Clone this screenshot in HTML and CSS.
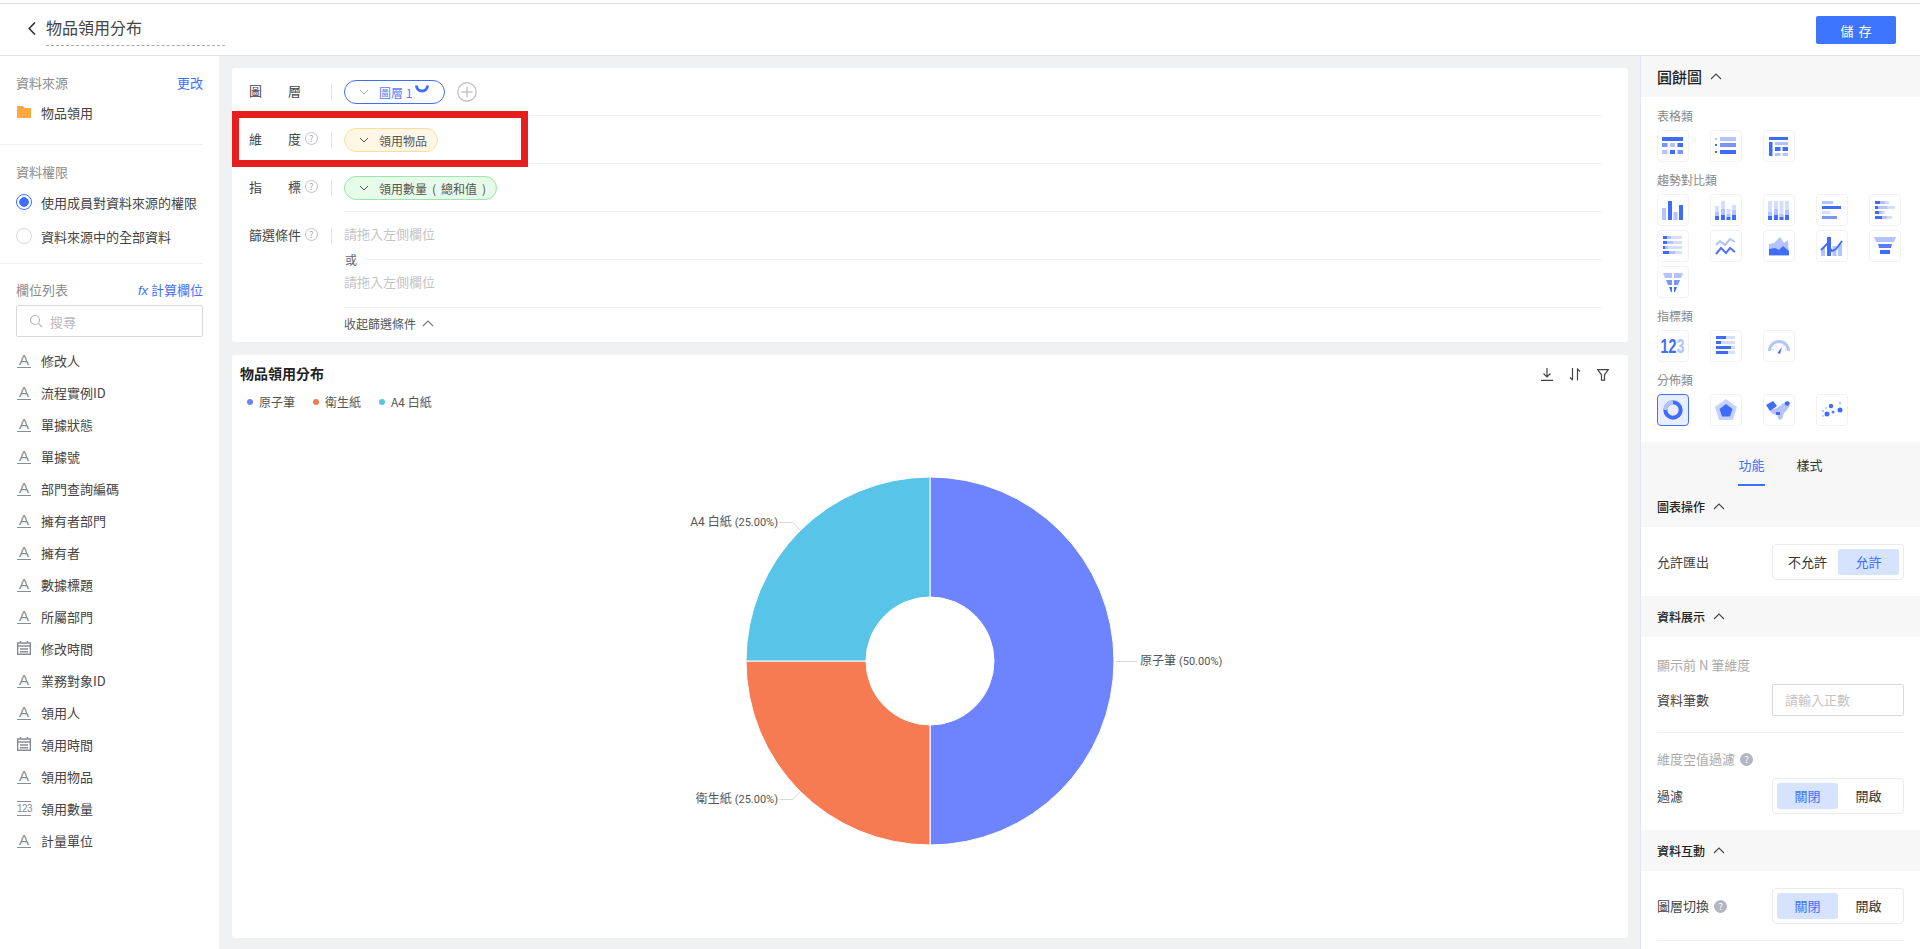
FILE: index.html
```html
<!DOCTYPE html>
<html lang="zh-Hant">
<head>
    <meta charset="UTF-8">
    <title>物品領用分布</title>
    <link rel="stylesheet" href="styles.css">
</head>
<body>
    <svg class="sprite" width="0" height="0">
        <symbol id="chev-down" viewBox="0 0 10 6"><polyline points="1,1 5,5 9,1" fill="none" stroke="currentColor" stroke-width="1"/></symbol>
        <symbol id="chev-up" viewBox="0 0 12 7"><polyline points="1,6 6,1 11,6" fill="none" stroke="currentColor" stroke-width="1.1"/></symbol>
        <symbol id="date" viewBox="0 0 14 14"><path d="M3.5 0v2M10.5 0v2M.7 2h12.600v11.300H.7zM.7 5h12.600M3 8h8M3 10.800h8" fill="none" stroke="#8a8d99" stroke-width="1.4"/></symbol>
    </svg>

    <div class="topline"></div>
    <header class="header">
        <svg class="back" width="8" height="13" viewBox="0 0 8 13"><polyline points="7,.5 1.2,6.500 7,12.500" fill="none" stroke="#333" stroke-width="1.6"/></svg>
        <div class="title">物品領用分布</div>
        <button class="save">儲 存</button>
    </header>

    <div class="layout">
        <!-- 左側資料欄 -->
        <aside class="sidebar">
            <div class="block source-block">
                <div class="block-head"><span>資料來源</span><a class="link">更改</a></div>
                <div class="source-item">
                    <svg width="14" height="12" viewBox="0 0 14 12"><path d="M0 0h6l1.500 2H14v10H0z" fill="#ffa940"/></svg>
                    物品領用
                </div>
            </div>
            <div class="block auth-block">
                <div class="block-head"><span>資料權限</span></div>
                <div class="radio-row"><i class="radio on"></i>使用成員對資料來源的權限</div>
                <div class="radio-row"><i class="radio"></i>資料來源中的全部資料</div>
            </div>
            <div class="field-block">
                <div class="block-head"><span>欄位列表</span><a class="link"><em>fx</em> 計算欄位</a></div>
                <div class="search">
                    <svg width="14" height="14" viewBox="0 0 14 14"><circle cx="6" cy="6" r="4.500" fill="none" stroke="#bbb" stroke-width="1.200"/><path d="M9.500 9.500L13 13" stroke="#bbb" stroke-width="1.200"/></svg>
                    搜尋
                </div>
                <ul class="fields">
                    <li><span class="type-a">A</span>修改人</li>
                    <li><span class="type-a">A</span>流程實例ID</li>
                    <li><span class="type-a">A</span>單據狀態</li>
                    <li><span class="type-a">A</span>單據號</li>
                    <li><span class="type-a">A</span>部門查詢編碼</li>
                    <li><span class="type-a">A</span>擁有者部門</li>
                    <li><span class="type-a">A</span>擁有者</li>
                    <li><span class="type-a">A</span>數據標題</li>
                    <li><span class="type-a">A</span>所屬部門</li>
                    <li><svg class="type-date"><use href="#date"/></svg>修改時間</li>
                    <li><span class="type-a">A</span>業務對象ID</li>
                    <li><span class="type-a">A</span>領用人</li>
                    <li><svg class="type-date"><use href="#date"/></svg>領用時間</li>
                    <li><span class="type-a">A</span>領用物品</li>
                    <li><span class="type-num">123</span>領用數量</li>
                    <li><span class="type-a">A</span>計量單位</li>
                </ul>
            </div>
        </aside>

        <!-- 中間設定與圖表 -->
        <main class="main">
            <section class="card query">
                <div class="q-row">
                    <div class="q-label"><span class="q-name">圖層</span></div>
                    <div class="q-body lined">
                        <span class="pill pill-layer">
                            <svg class="chev"><use href="#chev-down"/></svg>圖層 1
                            <svg class="pill-donut" width="14" height="10" viewBox="0 0 14 10"><path d="M1.500 1.500a5.500 5.500 0 0 0 11 0" fill="none" stroke="#3f6fff" stroke-width="3"/></svg>
                        </span>
                        <span class="add">
                            <svg width="20" height="20" viewBox="0 0 20 20"><circle cx="10" cy="10" r="9.200" fill="none" stroke="#c3c5d0" stroke-width="1.400"/><path d="M10 4.500v11M4.500 10h11" stroke="#c3c5d0" stroke-width="1.400"/></svg>
                        </span>
                    </div>
                </div>
                <div class="q-row">
                    <div class="q-label"><span class="q-name">維度</span><i class="help">?</i></div>
                    <div class="q-body lined">
                        <span class="pill pill-dim"><svg class="chev"><use href="#chev-down"/></svg>領用物品</span>
                    </div>
                </div>
                <div class="q-row">
                    <div class="q-label"><span class="q-name">指標</span><i class="help">?</i></div>
                    <div class="q-body lined">
                        <span class="pill pill-metric"><svg class="chev"><use href="#chev-down"/></svg>領用數量 ( 總和值 )</span>
                    </div>
                </div>
                <div class="q-filter">
                    <div class="q-label"><span class="q-name">篩選條件</span><i class="help">?</i></div>
                    <div class="filter-body">
                        <div class="hint">請拖入左側欄位</div>
                        <div class="or"><span>或</span></div>
                        <div class="hint">請拖入左側欄位</div>
                        <div class="collapse">收起篩選條件<svg class="chev-up"><use href="#chev-up"/></svg></div>
                    </div>
                </div>
                <div class="mark"></div>
            </section>

            <section class="card chart">
                <div class="chart-head">
                    <h3>物品領用分布</h3>
                    <div class="tools">
                        <svg width="12" height="13" viewBox="0 0 12 13"><path d="M6 0v8.500M2.500 5.500L6 9l3.500-3.500M0 12.300h12" fill="none" stroke="#444" stroke-width="1.200"/></svg>
                        <svg width="12" height="13" viewBox="0 0 12 13"><path d="M3.500 0v12M1 9.500L3.500 12M8.500 12.500V1L11 3.500" fill="none" stroke="#444" stroke-width="1.200"/></svg>
                        <svg width="12" height="12" viewBox="0 0 12 12"><path d="M.6.6h10.800L7.500 5.800v5.400H4.500V5.800z" fill="none" stroke="#444" stroke-width="1.200"/></svg>
                    </div>
                </div>
                <div class="legend">
                    <span><i class="dot d-blue"></i>原子筆</span>
                    <span><i class="dot d-orange"></i>衛生紙</span>
                    <span><i class="dot d-cyan"></i>A4 白紙</span>
                </div>
                <svg class="pie" width="1396" height="527" viewBox="0 0 1396 527">
                    <g stroke="#fff" stroke-width="1">
                        <path d="M698 66A184 184 0 0 1 698 434L698 314A64 64 0 0 0 698 186Z" fill="#6e84ff"/>
                        <path d="M698 434A184 184 0 0 1 514 250L634 250A64 64 0 0 0 698 314Z" fill="#f67a52"/>
                        <path d="M514 250A184 184 0 0 1 698 66L698 186A64 64 0 0 0 634 250Z" fill="#58c5e8"/>
                    </g>
                    <g fill="none" stroke="#d9d9d9" stroke-width="1">
                        <path d="M884 250.500H905"/>
                        <path d="M547 111.500H561L568 119"/>
                        <path d="M547 388.500H561L568 381"/>
                    </g>
                    <g class="pie-text">
                        <text x="908" y="254">原子筆 <tspan class="pct">(50.00%)</tspan></text>
                        <text x="546" y="115" text-anchor="end">A4 白紙 <tspan class="pct">(25.00%)</tspan></text>
                        <text x="546" y="392" text-anchor="end">衛生紙 <tspan class="pct">(25.00%)</tspan></text>
                    </g>
                </svg>
            </section>
        </main>

        <!-- 右側圖表類型與屬性 -->
        <aside class="panel">
            <div class="sec-head big">圓餅圖<svg class="chev-up"><use href="#chev-up"/></svg></div>
            <div class="types">
                <div class="type-label">表格類</div>
                <div class="tiles">
                    <div class="tile"><svg viewBox="0 0 32 32"><rect class="k" x="5" y="7" width="21" height="4"/><rect class="m" x="5" y="13" width="5.500" height="4"/><rect class="l" x="13" y="13" width="5" height="4"/><rect class="k" x="20.500" y="13" width="5.500" height="4"/><rect class="l" x="5" y="20" width="5.500" height="4"/><rect class="k" x="13" y="20" width="5" height="4"/><rect class="m" x="20.500" y="20" width="5.500" height="4"/></svg></div>
                    <div class="tile"><svg viewBox="0 0 32 32"><rect class="l" x="5" y="8" width="2" height="2"/><rect class="l" x="10" y="7" width="16" height="4"/><rect class="k" x="5" y="14" width="2" height="2"/><rect class="m" x="10" y="13" width="16" height="4"/><rect class="k" x="5" y="21" width="2" height="2"/><rect class="k" x="10" y="20" width="16" height="4"/></svg></div>
                    <div class="tile"><svg viewBox="0 0 32 32"><rect class="k" x="6" y="7" width="19" height="3"/><rect class="k" x="6" y="12" width="3.500" height="14"/><rect class="l" x="12" y="12" width="13" height="3"/><rect class="k" x="12" y="17" width="5.500" height="4"/><rect class="k" x="19.500" y="17" width="5.500" height="4"/><rect class="l" x="12" y="23" width="5.500" height="3"/><rect class="l" x="19.500" y="23" width="5.500" height="3"/></svg></div>
                </div>
                <div class="type-label">趨勢對比類</div>
                <div class="tiles">
                    <div class="tile"><svg viewBox="0 0 32 32"><rect class="l" x="5" y="14" width="4" height="12"/><rect class="k" x="11" y="7" width="4" height="19"/><rect class="l" x="16.500" y="18" width="4" height="8"/><rect class="k" x="22" y="11" width="4" height="15"/></svg></div>
                    <div class="tile"><svg viewBox="0 0 32 32"><rect class="p" x="5" y="12" width="4" height="6"/><rect class="l" x="5" y="18" width="4" height="4"/><rect class="k" x="5" y="22" width="4" height="4"/><rect class="p" x="11" y="7" width="4" height="8"/><rect class="l" x="11" y="15" width="4" height="6"/><rect class="k" x="11" y="21" width="4" height="5"/><rect class="p" x="16.500" y="15" width="4" height="5"/><rect class="l" x="16.500" y="20" width="4" height="3"/><rect class="k" x="16.500" y="23" width="4" height="3"/><rect class="p" x="22" y="11" width="4" height="5"/><rect class="l" x="22" y="16" width="4" height="5"/><rect class="k" x="22" y="21" width="4" height="5"/></svg></div>
                    <div class="tile"><svg viewBox="0 0 32 32"><rect class="p" x="5" y="7" width="4" height="19"/><rect class="l" x="5" y="18" width="4" height="4"/><rect class="k" x="5" y="22" width="4" height="4"/><rect class="p" x="11" y="7" width="4" height="19"/><rect class="l" x="11" y="15" width="4" height="6"/><rect class="k" x="11" y="21" width="4" height="5"/><rect class="p" x="16.500" y="7" width="4" height="19"/><rect class="l" x="16.500" y="20" width="4" height="3"/><rect class="k" x="16.500" y="23" width="4" height="3"/><rect class="p" x="22" y="7" width="4" height="19"/><rect class="l" x="22" y="16" width="4" height="5"/><rect class="k" x="22" y="21" width="4" height="5"/></svg></div>
                    <div class="tile"><svg viewBox="0 0 32 32"><rect class="l" x="6" y="7" width="11" height="3"/><rect class="k" x="6" y="12" width="19" height="3"/><rect class="p" x="6" y="17" width="8" height="3"/><rect class="m" x="6" y="22" width="15" height="3"/></svg></div>
                    <div class="tile"><svg viewBox="0 0 32 32"><rect class="k" x="6" y="7" width="5" height="3"/><rect class="l" x="11" y="7" width="5" height="3"/><rect class="p" x="16" y="7" width="4" height="3"/><rect class="k" x="6" y="12" width="3" height="3"/><rect class="l" x="9" y="12" width="9" height="3"/><rect class="p" x="18" y="12" width="8" height="3"/><rect class="k" x="6" y="17" width="4" height="3"/><rect class="l" x="10" y="17" width="3" height="3"/><rect class="p" x="13" y="17" width="3" height="3"/><rect class="k" x="6" y="22" width="7" height="3"/><rect class="l" x="13" y="22" width="5" height="3"/><rect class="p" x="18" y="22" width="5" height="3"/></svg></div>
                    <div class="tile"><svg viewBox="0 0 32 32"><rect class="p" x="6" y="6" width="19" height="3"/><rect class="k" x="6" y="6" width="4" height="3"/><rect class="l" x="10" y="6" width="4" height="3"/><rect class="p" x="6" y="11" width="19" height="3"/><rect class="k" x="6" y="11" width="4" height="3"/><rect class="l" x="10" y="11" width="6" height="3"/><rect class="p" x="6" y="16" width="19" height="3"/><rect class="k" x="6" y="16" width="2" height="3"/><rect class="l" x="8" y="16" width="3" height="3"/><rect class="p" x="6" y="21" width="19" height="3"/><rect class="k" x="6" y="21" width="6" height="3"/><rect class="l" x="12" y="21" width="6" height="3"/></svg></div>
                    <div class="tile"><svg viewBox="0 0 32 32"><polyline points="6,15 10,11 15,15 20,9 25,12" fill="none" stroke="#b3c3ff" stroke-width="2"/><polyline points="6,24 11,18 16,23 20,18 25,22" fill="none" stroke="#4a72ff" stroke-width="2"/></svg></div>
                    <div class="tile"><svg viewBox="0 0 32 32"><polygon points="6,14 11,13 17,7 21,13 25,10 26,26 6,26" fill="#b3c3ff"/><polygon points="6,19 12,18 16,20 20,16 26,21 26,25 6,25" fill="#3f6cfa"/></svg></div>
                    <div class="tile"><svg viewBox="0 0 32 32"><rect class="l" x="5" y="18" width="4" height="8"/><rect class="k" x="11" y="7" width="4" height="19"/><rect class="l" x="16.500" y="16" width="4" height="10"/><rect class="l" x="22" y="14" width="4" height="12"/><polyline points="5,20 11,14 16,21 20,19 26,11" fill="none" stroke="#3f6cfa" stroke-width="1.800"/></svg></div>
                    <div class="tile"><svg viewBox="0 0 32 32"><polygon points="5,7 27,7 25,12 7,12" fill="#b3c3ff"/><polygon points="9,14 23,14 22,18 10,18" fill="#5a7dff"/><rect class="k" x="11" y="20" width="10" height="4"/></svg></div>
                    <div class="tile"><svg viewBox="0 0 32 32"><polygon points="6,7 15,7 15,12 8,12" fill="#b3c3ff"/><polygon points="17,7 26,7 24,12 17,12" fill="#b3c3ff"/><polygon points="9,14 15,14 15,19 11,19" fill="#7a95ff"/><polygon points="17,14 23,14 21,19 17,19" fill="#7a95ff"/><polygon points="12,21 15,21 15,26 14,26" fill="#3f6cfa"/><polygon points="17,21 20,21 18,26 17,26" fill="#3f6cfa"/></svg></div>
                </div>
                <div class="type-label">指標類</div>
                <div class="tiles">
                    <div class="tile tile-num"><span class="num-squeeze"><b>12</b><b class="three">3</b></span></div>
                    <div class="tile"><svg viewBox="0 0 32 32"><rect class="p" x="6" y="6" width="19" height="3"/><rect class="k" x="6" y="6" width="10" height="3"/><rect class="p" x="6" y="11" width="19" height="3"/><rect class="k" x="6" y="11" width="5" height="3"/><rect class="p" x="6" y="16" width="19" height="3"/><rect class="k" x="6" y="16" width="15" height="3"/><rect class="p" x="6" y="21" width="19" height="3"/><rect class="k" x="6" y="21" width="12" height="3"/></svg></div>
                    <div class="tile"><svg viewBox="0 0 32 32"><path d="M5 21a11 11 0 0 1 22 0h-3a8 8 0 0 0-16 0z" fill="#b3c3ff"/><path d="M14.500 23l4.500-6 -2 7z" fill="#3f6cfa"/><path d="M9.500 19.500l2 .5M12.500 15.500l1 1.500M20 16.500l1-1.200M22 19.500l1.500-.5" stroke="#b3c3ff" stroke-width="1"/></svg></div>
                </div>
                <div class="type-label">分佈類</div>
                <div class="tiles">
                    <div class="tile selected"><svg viewBox="0 0 32 32"><circle cx="16" cy="16" r="7.700" fill="none" stroke="#3f6cfa" stroke-width="4"/><path d="M8.300 16a7.700 7.700 0 0 1 7.700-7.700" fill="none" stroke="#b3c3ff" stroke-width="4"/></svg></div>
                    <div class="tile"><svg viewBox="0 0 32 32"><polygon points="16,5 27,13 23,26 9,26 5,13" fill="#c6d2ff"/><polygon points="16,10 22.500,15 20,22.500 12,22.500 9.500,15" fill="#3f6cfa"/></svg></div>
                    <div class="tile"><svg viewBox="0 0 32 32"><path d="M8 16l6-2 4-3 4-3 3 1 2 2-3 5-3 3-2 6-3 1-2-5-4-1-3-3z" fill="#b3c3ff"/><path d="M3 11l7-4 4 5-7 5z" fill="#3f6cfa"/><path d="M22 8l3-1 2 2-2 3-3-1z" fill="#3f6cfa"/><rect class="k" x="13" y="18" width="4" height="3"/></svg></div>
                    <div class="tile"><svg viewBox="0 0 32 32"><circle cx="15" cy="12" r="2.200" fill="#3f6cfa"/><circle cx="24" cy="16" r="2.500" fill="#3f6cfa"/><circle cx="11" cy="20" r="2.500" fill="#3f6cfa"/><circle cx="17" cy="18" r="1.500" fill="#5a7dff"/><circle cx="24" cy="9" r="1.200" fill="#b3c3ff"/><circle cx="7" cy="17" r="1.200" fill="#b3c3ff"/><circle cx="7" cy="22" r="1" fill="#b3c3ff"/><circle cx="10" cy="14" r="1" fill="#b3c3ff"/></svg></div>
                </div>
            </div>

            <div class="tabs">
                <span class="tab active">功能</span>
                <span class="tab">樣式</span>
            </div>

            <div class="sec-head">圖表操作<svg class="chev-up"><use href="#chev-up"/></svg></div>
            <div class="sec-body">
                <div class="prop">
                    <span>允許匯出</span>
                    <div class="seg"><span>不允許</span><span class="on">允許</span></div>
                </div>
            </div>

            <div class="sec-head">資料展示<svg class="chev-up"><use href="#chev-up"/></svg></div>
            <div class="sec-body show-body">
                <div class="sub-label">顯示前 N 筆維度</div>
                <div class="prop">
                    <span>資料筆數</span>
                    <div class="num-input">請輸入正數</div>
                </div>
                <div class="rule"></div>
                <div class="sub-label">維度空值過濾<i class="help solid">?</i></div>
                <div class="prop">
                    <span>過濾</span>
                    <div class="seg"><span class="on">關閉</span><span>開啟</span></div>
                </div>
            </div>

            <div class="sec-head">資料互動<svg class="chev-up"><use href="#chev-up"/></svg></div>
            <div class="sec-body last">
                <div class="prop">
                    <span>圖層切換<i class="help solid">?</i></span>
                    <div class="seg"><span class="on">關閉</span><span>開啟</span></div>
                </div>
                <div class="rule"></div>
            </div>
        </aside>
    </div>
</body>
</html>
```

FILE: styles.css
```css
* {
    box-sizing: border-box;
}
html, body {
    height: 100%;
}
body {
    margin: 0;
    overflow: hidden;
    display: flex;
    flex-direction: column;
    font-family: "Noto Sans CJK TC", "Noto Sans", sans-serif;
    font-size: 13px;
    color: #444;
    background-color: #fff;
}
.sprite {
    position: absolute;
}
.topline {
    height: 4px;
    flex: none;
    border-bottom: 1px solid #e2e2e2;
}

/* 頂部 */
.header {
    height: 52px;
    flex: none;
    display: flex;
    align-items: flex-start;
    border-bottom: 1px solid #e4e4e4;
    padding-right: 24px;
}
.back {
    margin: 18px 10px 0 28px;
}
.title {
    width: 179px;
    height: 42px;
    font-size: 16px;
    line-height: 46px;
    color: #444;
    border-bottom: 1px dashed #aaa;
}
.save {
    margin: 12px 0 0 auto;
    width: 80px;
    height: 28px;
    border: none;
    border-radius: 2px;
    background-color: #3e75ff;
    color: #fff;
    font: 13px "Noto Sans CJK TC", sans-serif;
    word-spacing: 2px;
}

.layout {
    flex: 1;
    min-height: 0;
    display: flex;
}

/* 左側 */
.sidebar {
    width: 219px;
    flex: none;
    padding-right: 16px;
}
.block {
    padding-left: 16px;
    border-bottom: 1px solid #f0f0f0;
}
.source-block, .auth-block {
    padding-top: 18px;
}
.source-block {
    height: 89px;
}
.auth-block {
    height: 119px;
}
.block-head {
    display: flex;
    justify-content: space-between;
    height: 18px;
    line-height: 18px;
    color: #8c8c8c;
}
.link {
    color: #3f6fff;
    white-space: nowrap;
}
.link em {
    font-family: "Liberation Sans", sans-serif;
    font-size: 13px;
}
.source-item {
    display: flex;
    align-items: center;
    gap: 10px;
    height: 18px;
    margin-top: 11px;
    margin-left: 1px;
}
.radio-row {
    display: flex;
    align-items: center;
    gap: 9px;
    height: 34px;
}
.block-head + .radio-row {
    margin-top: 4px;
}
.radio {
    width: 16px;
    height: 16px;
    border: 1px solid #d9d9d9;
    border-radius: 50%;
    flex: none;
}
.radio.on {
    border-color: #3f6fff;
    background: radial-gradient(circle, #3f6fff 0 4.500px, #fff 5px);
}
.field-block {
    padding: 17px 0 0 16px;
}
.search {
    display: flex;
    align-items: center;
    gap: 7px;
    height: 32px;
    margin-top: 6px;
    padding-left: 12px;
    border: 1px solid #d9d9d9;
    border-radius: 2px;
    color: #bbb;
}
.fields {
    list-style: none;
    margin: 7px 0 0;
    padding: 0;
}
.fields li {
    display: flex;
    align-items: center;
    gap: 10px;
    height: 32px;
    white-space: nowrap;
    margin-left: 1px;
}
.type-a, .type-num {
    width: 14px;
    height: 15px;
    flex: none;
    text-align: center;
    border-bottom: 1px solid #8a8d99;
    font-family: "Liberation Sans", sans-serif;
    font-size: 15px;
    line-height: 14px;
    color: #8a8d99;
}
.type-num {
    font-size: 10px;
    letter-spacing: -.5px;
    border-top: 1px solid #8a8d99;
    line-height: 13px;
}
.type-date {
    width: 14px;
    height: 14px;
    flex: none;
}

/* 中間 */
.main {
    flex: 1;
    min-width: 0;
    display: flex;
    flex-direction: column;
    gap: 13px;
    padding: 12px 12px 11px 13px;
    background-color: #f0f1f3;
}
.card {
    background-color: #fff;
    border-radius: 3px;
}
.query {
    position: relative;
    height: 274px;
    flex: none;
    padding-left: 17px;
}
.q-row {
    display: flex;
    height: 48px;
}
.q-label {
    width: 95px;
    flex: none;
    display: flex;
    align-items: center;
    position: relative;
    height: 16px;
    margin-top: 16px;
    color: #444;
}
.q-label::after {
    content: "";
    position: absolute;
    left: 82px;
    top: 0;
    width: 1px;
    height: 16px;
    background-color: #e4e4e4;
}
.q-name {
    width: 52px;
    margin-top: -3px;
    text-align-last: justify;
    white-space: nowrap;
}
.help {
    width: 13px;
    height: 13px;
    margin-left: 4px;
    border: 1px solid #c0c0cc;
    border-radius: 50%;
    font-style: normal;
    font-size: 9px;
    line-height: 11px;
    text-align: center;
    color: #a8a8b8;
    flex: none;
    display: inline-block;
}
.q-label .help {
    margin-top: -4px;
}
.help.solid {
    background-color: #b3b6c2;
    border-color: #b3b6c2;
    color: #fff;
    vertical-align: 1px;
    margin-left: 5px;
}
.q-body {
    flex: 1;
    display: flex;
    align-items: flex-start;
    gap: 12px;
    padding-top: 12px;
    margin-right: 26px;
    border-bottom: 1px solid #f0f0f0;
}
.pill {
    display: inline-flex;
    align-items: center;
    height: 24px;
    padding: 0 10px 0 14px;
    border: 1px solid;
    border-radius: 12px;
    font-size: 12px;
    white-space: nowrap;
    color: #555;
}
.chev {
    width: 10px;
    height: 6px;
    margin-right: 10px;
    color: #555;
}
.pill-layer {
    width: 101px;
    position: relative;
    border-color: #3f6fff;
    color: #5b7cf5;
}
.pill-layer .chev {
    color: #aaa;
}
.pill-donut {
    position: absolute;
    left: 70px;
    top: 3px;
}
.pill-dim {
    border-color: #ffdd99;
    background-color: #fff7e6;
}
.pill-metric {
    border-color: #9be6a8;
    background-color: #e6fbe9;
    word-spacing: 2.300px;
}
.add {
    height: 20px;
    margin-top: 2px;
}
.q-filter {
    display: flex;
}
.filter-body {
    flex: 1;
    margin-right: 26px;
}
.hint {
    height: 18px;
    line-height: 18px;
    color: #c4c4c4;
    margin-top: 13px;
}
.or {
    display: flex;
    align-items: center;
    gap: 7px;
    height: 18px;
    margin-top: 7px;
    margin-left: 1px;
    font-size: 12px;
    color: #666;
}
.or::after {
    content: "";
    flex: 1;
    height: 1px;
    background-color: #f0f0f0;
}
.or + .hint {
    margin-top: 5px;
}
.collapse {
    display: flex;
    align-items: center;
    gap: 6px;
    height: 34px;
    margin-top: 16px;
    padding-bottom: 2px;
    border-top: 1px solid #f0f0f0;
    font-size: 12px;
    color: #555;
}
.chev-up {
    width: 12px;
    height: 7px;
    margin-left: 8px;
    color: #444;
}
.collapse .chev-up {
    margin-left: 0;
    color: #777;
}
/* 紅框標註 */
.mark {
    position: absolute;
    left: 0;
    top: 43px;
    width: 296px;
    height: 56px;
    border: 7px solid #e61e1e;
}

.chart {
    flex: 1;
    min-height: 0;
    overflow: hidden;
}
.chart-head {
    display: flex;
    justify-content: space-between;
    align-items: center;
    padding: 8px 19px 0 8px;
    height: 28px;
}
.chart-head h3 {
    margin: 0;
    font-size: 14px;
    line-height: 20px;
    font-weight: 700;
    color: #222;
}
.tools {
    display: flex;
    align-items: center;
    gap: 16px;
    margin-top: 3px;
}
.legend {
    display: flex;
    gap: 18px;
    height: 18px;
    margin-top: 10px;
    padding-left: 15px;
    font-size: 12px;
    line-height: 18px;
    color: #555;
}
.legend span {
    display: flex;
    align-items: center;
    gap: 6px;
}
.dot {
    width: 6px;
    height: 6px;
    border-radius: 50%;
}
.d-blue { background-color: #6e84ff; }
.d-orange { background-color: #f67a52; }
.d-cyan { background-color: #58c5e8; }
.pie {
    display: block;
}
.pie-text {
    font-family: Roboto, "Noto Sans CJK TC", sans-serif;
    font-size: 12px;
    fill: #555;
}
.pct {
    font-size: 11px;
}

/* 右側 */
.panel {
    width: 280px;
    flex: none;
    border-left: 1px solid #e3e6f0;
    background-color: #fff;
    overflow: hidden;
}
.sec-head {
    display: flex;
    align-items: center;
    height: 41px;
    padding-left: 16px;
    background-color: #f7f7f7;
    font-size: 12px;
    font-weight: 500;
    color: #222;
}
.sec-head.big {
    font-size: 15px;
}
.types {
    height: 345px;
    padding: 10px 0 0 16px;
}
.type-label {
    height: 18px;
    line-height: 18px;
    font-size: 12px;
    color: #888;
    margin-bottom: 5px;
}
.tiles {
    display: grid;
    grid-template-columns: repeat(5, 32px);
    grid-auto-rows: 32px;
    column-gap: 21px;
    row-gap: 4px;
    margin-bottom: 9px;
}
.tile {
    border: 1px solid #f2f2f2;
    border-radius: 4px;
    display: flex;
    align-items: center;
    justify-content: center;
}
.tile svg {
    width: 32px;
    height: 32px;
    flex: none;
}
.tile .k { fill: #3f6cfa; }
.tile .m { fill: #7a95ff; }
.tile .l { fill: #b3c3ff; }
.tile .p { fill: #d5deff; }
.tile.selected {
    border-color: #3f6fff;
    background-color: #e9eeff;
}
.tile-num {
    font-family: "Liberation Sans", sans-serif;
    font-size: 21px;
    color: #3f6cfa;
    overflow: hidden;
}
.num-squeeze {
    display: inline-block;
    white-space: nowrap;
    transform: scaleX(.68);
}
.tile-num .three {
    color: #b3c3ff;
}
.tabs {
    display: flex;
    justify-content: center;
    gap: 32px;
    height: 44px;
    background-color: #f7f7f7;
}
.tab {
    height: 44px;
    line-height: 46px;
    color: #333;
}
.tab.active {
    color: #3f6fff;
    border-bottom: 2px solid #3f6fff;
}
.sec-body {
    padding: 17px 16px 16px 16px;
}
.sec-body.show-body {
    padding-top: 19px;
}
.prop {
    display: flex;
    justify-content: space-between;
    align-items: center;
    color: #444;
}
.prop > span {
    padding-bottom: 2px;
}
.seg {
    display: flex;
    width: 132px;
    height: 36px;
    padding: 4px;
    border: 1px solid #ebebeb;
    border-radius: 4px;
}
.seg span {
    flex: 1;
    text-align: center;
    line-height: 25px;
    border-radius: 3px;
    color: #333;
}
.seg .on {
    background-color: #d5e3ff;
    color: #3f6fff;
}
.sub-label {
    display: flex;
    align-items: center;
    height: 18px;
    line-height: 18px;
    color: #aaa;
    margin-bottom: 10px;
}
.rule {
    height: 1px;
    margin: 16px 0 17px;
    background-color: #f0f0f0;
}
.num-input {
    width: 132px;
    height: 32px;
    padding-left: 12px;
    line-height: 30px;
    border: 1px solid #d9d9d9;
    border-radius: 2px;
    color: #c4c4c4;
}
```
